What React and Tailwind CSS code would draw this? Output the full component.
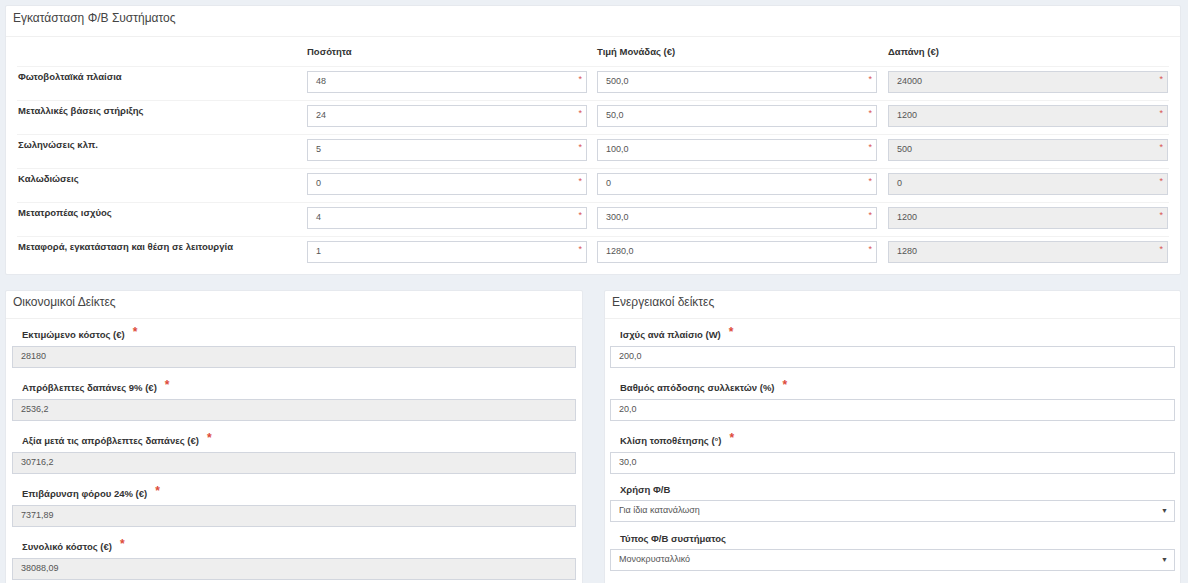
import React from "react";

const rows = [
  ["Φωτοβολταϊκά πλαίσια", "48", "500,0", "24000"],
  ["Μεταλλικές βάσεις στήριξης", "24", "50,0", "1200"],
  ["Σωληνώσεις κλπ.", "5", "100,0", "500"],
  ["Καλωδιώσεις", "0", "0", "0"],
  ["Μετατροπέας ισχύος", "4", "300,0", "1200"],
  ["Μεταφορά, εγκατάσταση και θέση σε λειτουργία", "1", "1280,0", "1280"],
];

const econ = [
  ["Εκτιμώμενο κόστος (€)", "28180"],
  ["Απρόβλεπτες δαπάνες 9% (€)", "2536,2"],
  ["Αξία μετά τις απρόβλεπτες δαπάνες (€)", "30716,2"],
  ["Επιβάρυνση φόρου 24% (€)", "7371,89"],
  ["Συνολικό κόστος (€)", "38088,09"],
];

const energy = [
  ["Ισχύς ανά πλαίσιο (W)", "200,0"],
  ["Βαθμός απόδοσης συλλεκτών (%)", "20,0"],
  ["Κλίση τοποθέτησης (°)", "30,0"],
];

const TableInput = ({ value, readOnly }) => (
  <div
    className={`relative h-[22px] w-[280px] border border-[#d2d6de] flex items-center pl-[8px] text-[9px] text-[#555] ${
      readOnly ? "bg-[#eeeeee]" : "bg-white"
    }`}
  >
    {value}
    <span className="absolute right-[4px] top-[1px] text-[9px] text-[#d9534f]">*</span>
  </div>
);

const Field = ({ label, value, readOnly, required = true, select, className = "" }) => (
  <div className={className}>
    <div className="h-[18px] flex items-center pl-[10px] text-[9.5px] font-bold text-[#333]">
      {label}
      {required && <span className="ml-[8px] -mt-[6px] text-[12px] text-[#dd4b39]">*</span>}
    </div>
    <div
      className={`${select ? "mt-[1px]" : "mt-[2px]"} h-[22px] border border-[#d2d6de] flex items-center justify-between pl-[8px] pr-[6px] text-[9px] text-[#555] ${
        readOnly ? "bg-[#eeeeee]" : "bg-white"
      }`}
    >
      <span>{value}</span>
      {select && <span className="text-[7px] text-[#444]">▼</span>}
    </div>
  </div>
);

const PanelHeader = ({ title, h }) => (
  <div className={`${h} px-[7px] border-b border-[#f0f0f0] text-[12px] leading-[15px] text-[#444]`}>
    {title}
  </div>
);

export default function App() {
  return (
    <div
      className="min-h-[583px] w-[1188px] bg-[#ecf0f5] pt-[5px] pl-[5px] pr-[7px]"
      style={{ fontFamily: '"Liberation Sans", Arial, sans-serif' }}
    >
      <div className="bg-white border border-[#e6e9ee] rounded-[2px]">
        <PanelHeader title="Εγκατάσταση Φ/Β Συστήματος" h="h-[31px] pt-[5px]" />
        <div className="px-[11px] pb-[4px]">
          <div className="flex h-[29px] pt-[9px] leading-[12px] text-[9.5px] font-bold text-[#333]">
            <div className="w-[290px]" />
            <div className="w-[290px]">Ποσότητα</div>
            <div className="w-[291px]">Τιμή Μονάδας (€)</div>
            <div>Δαπάνη (€)</div>
          </div>
          {rows.map(([label, q, p, total]) => (
            <div key={label} className="flex h-[34px] border-t border-[#f2f2f2] pt-[4px]">
              <div className="w-[290px] pl-[1px] pt-[1px] leading-[10px] text-[9.5px] font-bold text-[#333]">{label}</div>
              <div className="w-[290px]">
                <TableInput value={q} />
              </div>
              <div className="w-[291px]">
                <TableInput value={p} />
              </div>
              <div>
                <TableInput value={total} readOnly />
              </div>
            </div>
          ))}
        </div>
      </div>

      <div className="mt-[15px] flex gap-[21px]">
        <div className="w-[578px] bg-white border border-[#e6e9ee] rounded-[2px]">
          <PanelHeader title="Οικονομικοί Δείκτες" h="h-[28px] pt-[4px]" />
          <div className="flex flex-col px-[6px] pt-[7px]">
            {econ.map(([l, v]) => (
              <Field key={l} label={l} value={v} readOnly className="mb-[11px]" />
            ))}
          </div>
        </div>
        <div className="w-[577px] bg-white border border-[#e6e9ee] rounded-[2px]">
          <PanelHeader title="Ενεργειακοί δείκτες" h="h-[28px] pt-[4px]" />
          <div className="flex flex-col px-[5px] pt-[7px] pb-[10px]">
            {energy.map(([l, v], i) => (
              <Field key={l} label={l} value={v} className={i < 2 ? "mb-[11px]" : ""} />
            ))}
            <Field label="Χρήση Φ/Β" value="Για ίδια κατανάλωση" required={false} select className="mt-[7px]" />
            <Field label="Τύπος Φ/Β συστήματος" value="Μονοκρυσταλλικό" required={false} select className="mt-[8px]" />
          </div>
        </div>
      </div>
    </div>
  );
}
